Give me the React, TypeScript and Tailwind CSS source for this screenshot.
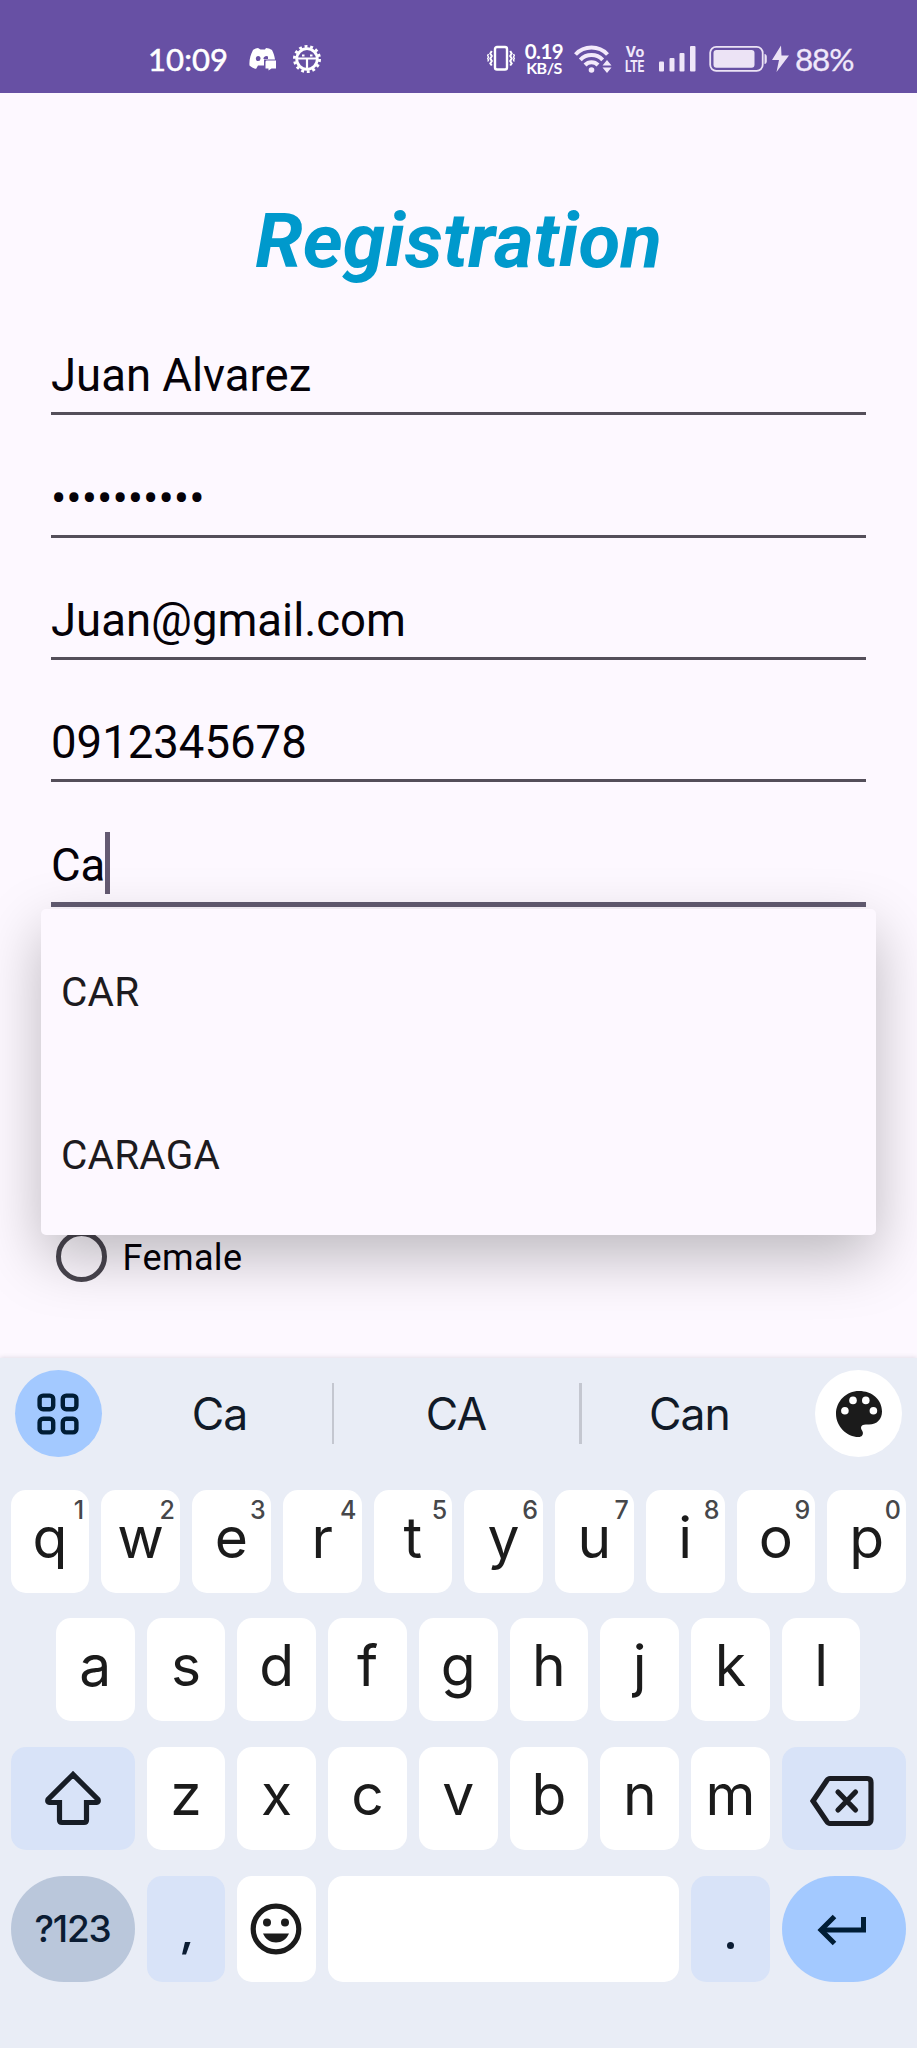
import type { ReactNode } from "react";

function StatusBar() {
  return (
    <header className="flex h-[93px] shrink-0 items-center bg-[#6750a4] pt-[25px] pl-[148px] text-white">
      <span className="w-[101px] font-['Lato'] text-[31px] leading-[36px] tracking-[0.1px] [-webkit-text-stroke:0.5px_white]">
        10:09
      </span>
      <svg width="28" height="24" viewBox="0 0 28 24" fill="#fff">
        <path d="M9 1C6 1.5 4 3 4 3C1.500 8 0 13 0.500 18.500C2.500 20.500 5 21.500 7 22L9 18.500H15V12.500H26C25.500 9 24.500 6 23 3C21 1.700 19 1.200 17 1L16 2.500H11.500Z" />
        <ellipse cx="9.200" cy="11.500" rx="2.300" ry="2.600" fill="#6750a4" />
        <path d="M14.500 11a3 3 0 0 1 4.500-1.500v2.500h-4.500z" fill="#6750a4" />
        <path d="M17.500 13.500H27V21.500H22.500L19.500 23.500V21.500H16.500V14.500Z" />
      </svg>
      <svg className="ml-[14.500px]" width="30" height="30" viewBox="0 0 30 30" fill="none" stroke="#fff">
        <circle cx="15" cy="15" r="10.300" strokeWidth="2.800" />
        <circle cx="15" cy="15" r="12.600" strokeWidth="2.800" strokeDasharray="2.900 2.755" />
        <path d="M5 14.500h20M15 14.500v11" strokeWidth="2.200" />
        <path d="M10 11.500h2.500M18 11.500h2.500" strokeWidth="1.800" />
      </svg>
      <div className="flex-1" />
      <svg width="28" height="28" viewBox="0 0 28 28" fill="none" stroke="#fff" strokeWidth="2.400">
        <rect x="8" y="2" width="12" height="22.500" rx="2" />
        <path d="M4.800 6l-1.500 2.500 1.500 2.500-1.500 2.500 1.500 2.500-1.500 2.500 1.500 2M23.200 6l1.500 2.500-1.500 2.500 1.500 2.500-1.500 2.500 1.500 2.500-1.500 2" strokeWidth="2" />
        <path d="M1.500 9l-.8 1.500.8 1.500-.8 1.500.8 1.500-.8 1.500M26.500 9l.8 1.500-.8 1.500.8 1.500-.8 1.500.8 1.500" strokeWidth="1.400" />
      </svg>
      <div className="ml-[9px] flex w-[40px] flex-col items-center font-['Lato'] font-bold">
        <span className="text-[20.500px] leading-[18px] tracking-[-0.5px]">0.19</span>
        <span className="text-[16px] leading-[16px] tracking-[-0.5px]">KB/S</span>
      </div>
      <svg className="ml-[10px]" width="40" height="32" viewBox="0 0 40 32" fill="none" stroke="#f3e9fb" strokeWidth="4">
        <path d="M1.500 11.500a22 22 0 0 1 32 0" />
        <path d="M6.300 16.800a15.500 15.500 0 0 1 22.400 0" />
        <path d="M11 22a9 9 0 0 1 13 0" />
        <circle cx="17.500" cy="27" r="2.800" fill="#f3e9fb" stroke="none" />
        <path d="M28.500 22.500l4.500-5.500 4.500 5.500zM28.500 24.500h9l-4.500 5.500z" fill="#f3e9fb" stroke="none" />
      </svg>
      <div className="ml-[11px] flex w-[20px] flex-col items-center pb-[1px] font-['Roboto'] font-bold text-[#f0e8fa]">
        <span className="text-[15.500px] leading-[14px]">Vo</span>
        <span className="scale-x-[0.7] text-[17px] leading-[14px]">LTE</span>
      </div>
      <svg className="ml-[14px]" width="37" height="26" viewBox="0 0 37 26" fill="#efe6f8">
        <rect x="0" y="15.500" width="5" height="10" rx="1" />
        <rect x="10.500" y="12" width="5" height="13.500" rx="1" />
        <rect x="20.500" y="7" width="5" height="18.500" rx="1" />
        <rect x="31" y="0" width="5.500" height="25.500" rx="1" />
      </svg>
      <svg className="ml-[13px]" width="82" height="28" viewBox="0 0 82 28" fill="#ece3f5">
        <rect x="1.200" y="1.800" width="52.500" height="24" rx="6" fill="none" stroke="#ece3f5" strokeWidth="1.800" />
        <rect x="4.500" y="5" width="41" height="17.800" rx="3" />
        <path d="M55.500 9v10c1.700 0 2.300-1.500 2.300-3v-4c0-1.500-.6-3-2.300-3z" />
        <path d="M72 0.500L63 15h7l-2.500 12L80 10.500h-7.500z" />
      </svg>
      <span className="ml-[4px] w-[122px] font-['Lato'] text-[31.500px] leading-[36px] tracking-[-1.200px] text-[#f0e8fa] [-webkit-text-stroke:0.3px_#f0e8fa]">
        88%
      </span>
    </header>
  );
}

function Field({ value, focused = false }: { value: string; focused?: boolean }) {
  return (
    <div className={focused ? "flex h-[125px] flex-col justify-end" : "flex h-[122.3px] flex-col justify-end"}>
      <div className="mb-[5px] flex h-[62px] items-center text-[45.500px] leading-[62px] text-[#050208]">
        <span>{value}</span>
        {focused && <span className="-mt-[6px] h-[62px] w-[5px] bg-[#645a72]" />}
      </div>
      <div className={focused ? "h-[5px] bg-[#625b71]" : "h-[3px] bg-[#544f5a]"} />
    </div>
  );
}

function Suggestions() {
  return (
    <div className="absolute top-[816px] left-[41px] flex h-[326px] w-[835px] flex-col rounded-[5px] bg-[#fdf8ff] text-[40.500px] tracking-[0.200px] text-[#1d1b20] shadow-[0_22px_60px_rgba(0,0,0,0.26)]">
      <div className="flex flex-1 items-center pt-[4px] pl-[20px]">CAR</div>
      <div className="flex flex-1 items-center pt-[4px] pl-[20px]">CARAGA</div>
    </div>
  );
}

function Key({ children, hint }: { children?: ReactNode; hint?: string }) {
  return (
    <div className="relative flex h-full flex-1 items-center justify-center rounded-[15px] bg-white pb-[8px] text-[#1b1b1b]">
      {children}
      {hint && (
        <span className="absolute top-[5px] right-[5px] text-[25px] leading-[30px] font-medium text-[#46474a]">{hint}</span>
      )}
    </div>
  );
}

const topRow = [..."qwertyuiop"];
const hints = [..."1234567890"];

function Keyboard() {
  return (
    <section className="flex h-[690px] shrink-0 flex-col bg-[#e9edf6] pt-[12px] pr-[11px] pl-[10.500px] font-['Inter'] shadow-[0_0_5px_rgba(80,70,90,0.2)]">
      <div className="flex h-[87px] items-center px-[4px] text-[44.500px] text-[#111a27]">
        <div className="flex h-[87px] w-[87px] items-center justify-center rounded-full bg-[#a3c9ff]">
          <svg width="42" height="42" viewBox="0 0 42 42" fill="none" stroke="#001d35" strokeWidth="4.400">
            <rect x="2.600" y="2.600" width="13.600" height="13.600" rx="3.500" />
            <rect x="25.800" y="2.600" width="13.600" height="13.600" rx="3.500" />
            <rect x="2.600" y="25.800" width="13.600" height="13.600" rx="3.500" />
            <rect x="25.800" y="25.800" width="13.600" height="13.600" rx="3.500" />
          </svg>
        </div>
        <span className="ml-[6px] w-[224px] pt-[1px] text-center tracking-[-1px]">Ca</span>
        <span className="h-[61px] w-[2.500px] bg-[#c4c7d0]" />
        <span className="w-[245px] pt-[1px] pr-[1px] text-center tracking-[-0.8px]">CA</span>
        <span className="h-[61px] w-[2.500px] bg-[#c4c7d0]" />
        <span className="w-[216px] pt-[1px] text-center tracking-[-1px]">Can</span>
        <div className="ml-auto flex h-[87px] w-[87px] items-center justify-center rounded-full bg-white">
          <svg width="46" height="46" viewBox="0 0 46 46" fill="#1b1b1b">
            <path d="M23 0C10.300 0 0 10.300 0 23C0 35.500 11 46 22.500 46C26 46 27.300 43.500 26.800 41.200C26.400 39.500 25 38.500 25 36.800C25 34.300 27 33.600 30 33.600H33C41 33.600 46 28 46 20.500C46 8.500 36 0 23 0Z" />
            <g fill="#fff">
              <circle cx="8.900" cy="19.700" r="3.800" />
              <circle cx="17" cy="9.400" r="3.800" />
              <circle cx="29.800" cy="9.400" r="3.800" />
              <circle cx="37.400" cy="19.700" r="3.800" />
            </g>
          </svg>
        </div>
      </div>
      <div className="mt-[33px] flex h-[103px] gap-[12px] text-[57px]">
        {topRow.map((c, i) => (
          <Key key={c} hint={hints[i]}>{c}</Key>
        ))}
      </div>
      <div className="mt-[25px] flex h-[103px] gap-[12px] px-[45.500px] text-[57px]">
        {[..."asdfghjkl"].map((c) => (
          <Key key={c}>{c}</Key>
        ))}
      </div>
      <div className="mt-[25.500px] flex h-[103.500px] gap-[12px] text-[57px]">
        <div className="flex w-[124px] items-center justify-center rounded-[15px] bg-[#d8e3f8]">
          <svg width="58" height="56" viewBox="0 0 58 56" fill="none" stroke="#171d26" strokeWidth="5.200" strokeLinejoin="miter">
            <path d="M29 4.500L4 29.500Q3 32 5.500 32.500H15.500V50Q15.500 52.500 18 52.500H40Q42.500 52.500 42.500 50V32.500H52.500Q55 32 54 29.500Z" />
          </svg>
        </div>
        {[..."zxcvbnm"].map((c) => (
          <Key key={c}>{c}</Key>
        ))}
        <div className="flex w-[124px] items-center justify-center rounded-[15px] bg-[#d8e3f8] pt-[5px] pr-[3px]">
          <svg width="64" height="52" viewBox="0 0 64 52" fill="none" stroke="#1a1c22" strokeWidth="5.200" strokeLinecap="round">
            <path d="M20 3.500H57Q61 3.500 61 7.500V44.500Q61 48.500 57 48.500H20Q18 48.500 16.500 46L3 26L16.500 6Q18 3.500 20 3.500Z" />
            <path d="M28 17L45.500 35M45.500 17L28 35" />
          </svg>
        </div>
      </div>
      <div className="mt-[25.500px] flex h-[106px] gap-[12px]">
        <div className="flex w-[124px] items-center justify-center rounded-[53px] bg-[#bac7db] text-[37px] font-medium tracking-[-1.200px] text-[#0b1c33]">
          ?123
        </div>
        <div className="flex w-[78.500px] items-end justify-center rounded-[15px] bg-[#d8e3f8] pb-[27px]">
          <svg width="10" height="13" viewBox="0 0 10 13" fill="#0b1c33">
            <path d="M4 0H9.500L5 12.500H1Z" />
          </svg>
        </div>
        <div className="flex w-[78.500px] items-center justify-center rounded-[15px] bg-white">
          <svg width="52" height="52" viewBox="0 0 52 52" fill="#1b1b1b">
            <circle cx="26" cy="26" r="22.800" fill="none" stroke="#1b1b1b" strokeWidth="5.200" />
            <circle cx="17" cy="19.500" r="4" />
            <circle cx="35" cy="19.500" r="4" />
            <path d="M13 30.500H39C36.500 36.500 31.500 39.500 26 39.500S15.500 36.500 13 30.500Z" />
          </svg>
        </div>
        <div className="flex-1 rounded-[15px] bg-white" />
        <div className="flex w-[78.700px] items-end justify-center rounded-[15px] bg-[#d8e3f8] pb-[33px]">
          <span className="h-[7px] w-[7px] rounded-full bg-[#0b1c33]" />
        </div>
        <div className="flex w-[124px] items-center justify-center rounded-[53px] bg-[#a3c9ff] pt-[3px] pr-[4px]">
          <svg width="50" height="32" viewBox="0 0 50 32" fill="none" stroke="#001d35" strokeWidth="5">
            <path d="M46.500 3V16H4" />
            <path d="M17.500 2.500L4 16L17.500 29.500" />
          </svg>
        </div>
      </div>
    </section>
  );
}

export default function App() {
  return (
    <div className="flex h-[2048px] w-[917px] flex-col overflow-hidden bg-[#fdf8ff] font-['Roboto',sans-serif]">
      <StatusBar />
      <main className="relative flex h-[1265px] shrink-0 flex-col px-[51px] pt-[98px]">
        <h1 className="h-[102px] text-center text-[76.500px] leading-[100px] font-bold text-[#0099cc] italic">Registration</h1>
        <Field value="Juan Alvarez" />
        <Field value="••••••••••" />
        <Field value="Juan@gmail.com" />
        <Field value="0912345678" />
        <Field value="Ca" focused />
        <div className="mt-[323px] flex h-[52px] items-center gap-[15.500px] pl-[5px] text-[36px] tracking-[0.400px] text-[#050208]">
          <span className="h-[51px] w-[51px] rounded-full border-[5px] border-[#49454f]" />
          <span className="pt-[3px]">Female</span>
        </div>
        <Suggestions />
      </main>
      <Keyboard />
    </div>
  );
}
